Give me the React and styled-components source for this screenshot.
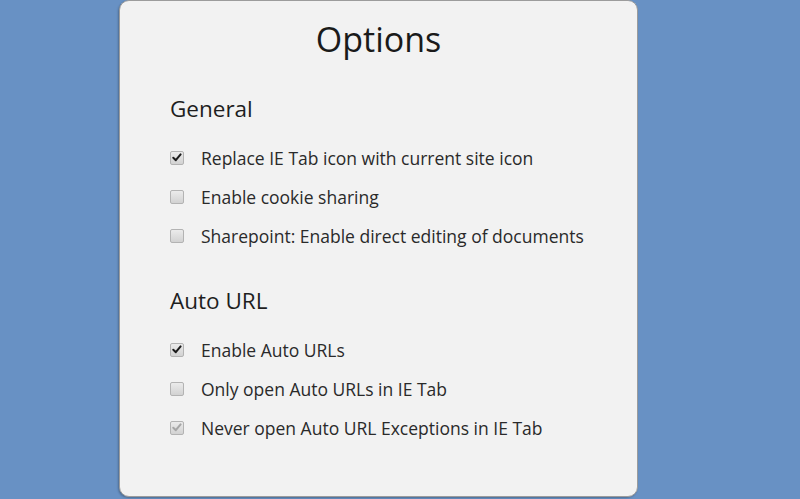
import React from 'react';
import styled, { createGlobalStyle } from 'styled-components';

const GlobalStyle = createGlobalStyle`
  html, body {
    margin: 0;
    padding: 0;
    background: #6891c4;
  }
  body {
    font-family: "Open Sans", "Noto Sans", sans-serif;
    color: #222;
  }
`;

const Page = styled.div`
  width: 800px;
  height: 499px;
  overflow: hidden;
  padding-left: 119px;
  box-sizing: border-box;
`;

const Panel = styled.div`
  width: 519px;
  height: 497px;
  box-sizing: border-box;
  background: #f2f2f2;
  border: 1px solid #9c9c9c;
  border-radius: 10px;
  box-shadow: -1px 1px 2px rgba(0, 0, 0, 0.25);
  padding: 14px 0 0 50px;
`;

const Title = styled.h1`
  margin: 0 0 0 -50px;
  text-align: center;
  font-weight: 400;
  font-size: 34px;
  line-height: 48px;
  color: #1a1a1a;
`;

const Section = styled.section`
  margin-top: ${(p) => p.$gap}px;
`;

const Heading = styled.h2`
  margin: 0 0 14px;
  font-weight: 400;
  font-size: 22.5px;
  line-height: 30px;
  color: #1e1e1e;
`;

const Row = styled.label`
  display: flex;
  align-items: center;
  height: 39px;
  font-size: 17.5px;
  color: #2a2a2a;
`;

const Box = styled.span`
  width: 14px;
  height: 14px;
  box-sizing: border-box;
  margin-right: 17px;
  border: 1px solid #b3b3b3;
  border-radius: 2px;
  background: linear-gradient(#ebebeb, #d2d2d2);
  display: flex;
  align-items: center;
  justify-content: center;
  flex-shrink: 0;
`;

const Check = ({ color }) => (
  <svg width="10" height="9" viewBox="0 0 10 9">
    <path d="M1.3 4.8 L3.8 7.2 L8.6 1.4" fill="none" stroke={color} strokeWidth="2" strokeLinecap="round" strokeLinejoin="round" />
  </svg>
);

const Option = ({ checked, disabled, children }) => (
  <Row>
    <Box>{checked && <Check color={disabled ? '#a6a6a6' : '#1c1c1c'} />}</Box>
    {children}
  </Row>
);

const sections = [
  {
    title: 'General',
    gap: 31,
    items: [
      { label: 'Replace IE Tab icon with current site icon', checked: true },
      { label: 'Enable cookie sharing' },
      { label: 'Sharepoint: Enable direct editing of documents' },
    ],
  },
  {
    title: 'Auto URL',
    gap: 31,
    items: [
      { label: 'Enable Auto URLs', checked: true },
      { label: 'Only open Auto URLs in IE Tab' },
      { label: 'Never open Auto URL Exceptions in IE Tab', checked: true, disabled: true },
    ],
  },
];

export default function App() {
  return (
    <Page>
      <GlobalStyle />
      <Panel>
        <Title>Options</Title>
        {sections.map((s) => (
          <Section key={s.title} $gap={s.gap}>
            <Heading>{s.title}</Heading>
            {s.items.map((it) => (
              <Option key={it.label} checked={it.checked} disabled={it.disabled}>
                {it.label}
              </Option>
            ))}
          </Section>
        ))}
      </Panel>
    </Page>
  );
}
